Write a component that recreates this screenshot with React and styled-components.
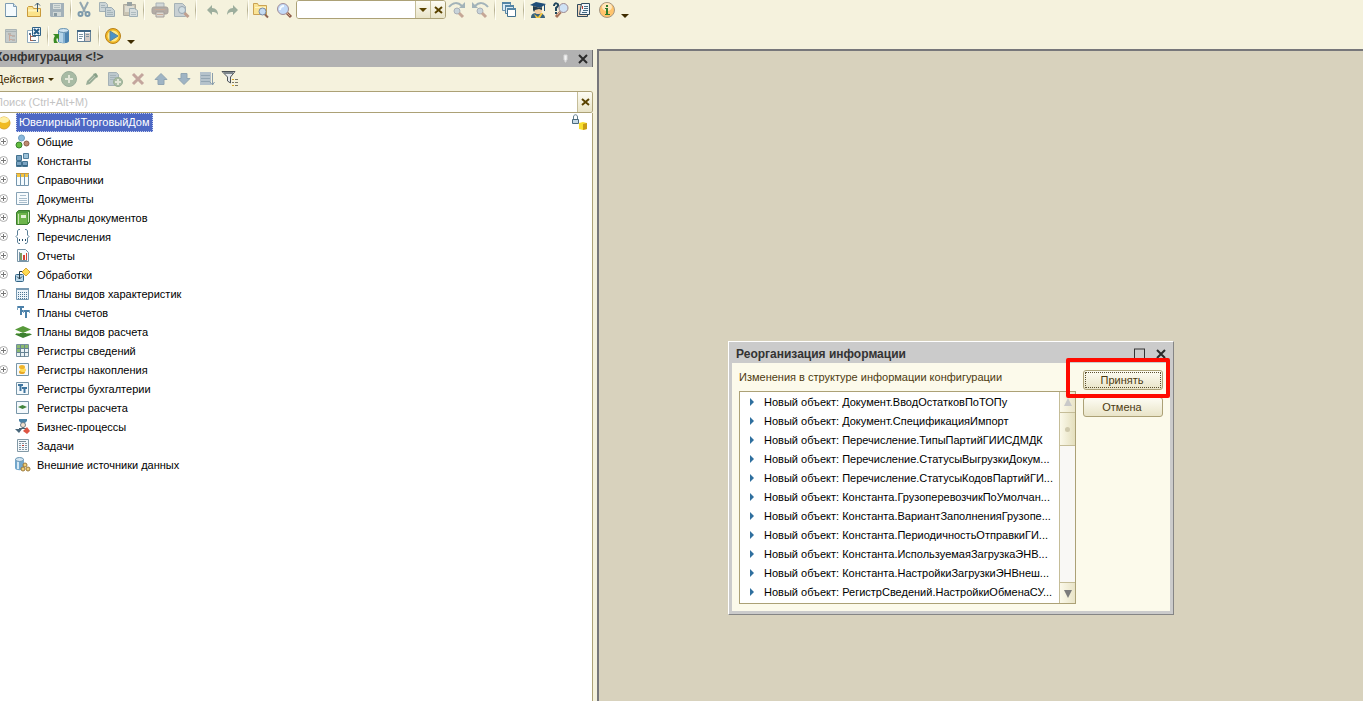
import React, { useState } from 'react';
import styled, { createGlobalStyle } from 'styled-components';

const GlobalStyle = createGlobalStyle`
  * {
    box-sizing: border-box;
  }

  body {
    margin: 0;
    background: #f5f2dd;
    overflow: hidden;
  }

  body, button, input {
    font-family: "Liberation Sans", Arial, sans-serif;
    font-size: 11px;
  }
`;

const icons = {
  newDoc: (
    <>
      <path d="M2.500 1.500h8l3 3v10h-11z" fill="#f4fafd" stroke="#7f9db4" />
      <path d="M10.500 1.500v3h3" fill="#d5e5ee" stroke="#7f9db4" />
      <path d="M3 14.500h11" stroke="#4f7790" />
    </>
  ),
  open: (
    <>
      <path d="M1.500 14.500v-9l1-1h4l1 2h7v8z" fill="#fbe38a" stroke="#c99a3c" />
      <path d="M2 8.500h12" stroke="#fff4bd" strokeWidth="2" />
      <path d="M11.500 10V1M9 3.500L11.500 1 14 3.500" fill="none" stroke="#3c5a70" />
    </>
  ),
  save: (
    <>
      <path d="M1 1h14v14H2l-1-1z" fill="#a3b1b9" />
      <path d="M4 2h8v5H4z" fill="#d9dfdc" />
      <path d="M4 10h8v4H4z" fill="#d0d7d5" />
      <path d="M5 11h3v3H5z" fill="#899aa2" />
      <path d="M5 3.500h6M5 5.500h6" stroke="#b2bec0" />
    </>
  ),
  cut: (
    <>
      <path d="M4 0l5 10M12 0L7 10" stroke="#93a6b0" strokeWidth="2" />
      <circle cx="4.500" cy="12" r="2" fill="none" stroke="#7d9aab" strokeWidth="2" />
      <circle cx="11.500" cy="12" r="2" fill="none" stroke="#7d9aab" strokeWidth="2" />
    </>
  ),
  copy: (
    <>
      <path d="M.5 .5h6l2 2v7h-8z" fill="#ccd5d7" stroke="#a3b1b6" />
      <path d="M6.500 5.500h6l3 3v6h-9z" fill="#c6d1d5" stroke="#98a9b2" />
      <path d="M2 3.500h4M2 5.500h4M8 8.500h4M8 10.500h6M8 12.500h6" stroke="#a5b4ba" />
    </>
  ),
  paste: (
    <>
      <path d="M1.500 2.500h12v11h-12z" fill="#c9c4b3" stroke="#aeaba0" />
      <path d="M5 0h5v4H5z" fill="#98a2a3" />
      <path d="M3 4h9v6H3z" fill="#dfddd2" />
      <path d="M7.500 6.500h5l3 2v6h-8z" fill="#d6dddd" stroke="#9eafb6" />
      <path d="M9 10.500h5M9 12.500h5" stroke="#afbcc0" />
    </>
  ),
  print: (
    <>
      <path d="M4 1h8v5H4z" fill="#d3d8d8" stroke="#aab2b6" />
      <rect x="0" y="5" width="16" height="7" rx="2" fill="#b4aca5" stroke="#a5a19d" />
      <path d="M4 10h8v5H4z" fill="#dad8d1" stroke="#a59f9b" />
      <path d="M5 12.500h6M3 7.500h10" stroke="#c9aa98" />
    </>
  ),
  preview: (
    <>
      <path d="M1.500 1.500h8l3 3v10h-11z" fill="#c8d0d3" stroke="#a6b2b6" />
      <circle cx="9" cy="8" r="3.500" fill="#d0dde2" stroke="#98a6b0" />
      <path d="M11.500 11l4 4" stroke="#c0a08f" strokeWidth="3" />
    </>
  ),
  undo: <path d="M3 8l5-5v3c4 0 6 3 6 7-2-3-3-3-6-3v3z" fill="#9dae9d" />,
  redo: <path d="M13 8L8 3v3c-4 0-6 3-6 7 2-3 3-3 6-3v3z" fill="#9dae9d" />,
  findFiles: (
    <>
      <path d="M.5 12.500v-11h4l1 2h8v9z" fill="#fae494" stroke="#caa253" />
      <path d="M2 5.500h11" stroke="#fff4c4" />
      <circle cx="9.500" cy="9.500" r="3.500" fill="#c5dbf1" stroke="#7a8ba5" />
      <path d="M12 12.500l3 3" stroke="#8e6552" strokeWidth="2" />
    </>
  ),
  find: (
    <>
      <circle cx="7" cy="7" r="5.500" fill="#c3daf8" stroke="#a28d98" />
      <path d="M4 8a4 4 0 0 1 4-4" fill="none" stroke="#f4faff" strokeWidth="2" />
      <path d="M11 11l4 4" stroke="#8d5b48" strokeWidth="3" />
      <path d="M11 11l3 3" stroke="#d5aa8f" />
    </>
  ),
  findNext: (
    <>
      <path d="M0 5c4-5 9-5 13-1" fill="none" stroke="#a3b3b9" strokeWidth="2" />
      <path d="M10 6h6V0z" fill="#a3b3b9" />
      <circle cx="8" cy="9" r="3" fill="#c8d3d9" stroke="#a9b0b8" />
      <path d="M10 11l4 4" stroke="#c5a796" strokeWidth="3" />
    </>
  ),
  findPrev: (
    <>
      <path d="M16 5C12 0 7 0 3 4" fill="none" stroke="#a3b3b9" strokeWidth="2" />
      <path d="M6 6H0V0z" fill="#a3b3b9" />
      <circle cx="8" cy="9" r="3" fill="#c8d3d9" stroke="#a9b0b8" />
      <path d="M10 11l4 4" stroke="#c5a796" strokeWidth="3" />
    </>
  ),
  windows: (
    <>
      <path d="M1.500 .5h8v8h-8z" fill="#dcebf4" stroke="#6b92ac" />
      <path d="M4.500 3.500h8v8h-8z" fill="#dcebf4" stroke="#5684a2" />
      <path d="M6.500 6.500h8v8h-8z" fill="#fff" stroke="#41718f" />
      <path d="M1 1h9M4 4h9M6 7h9" stroke="#5585a5" strokeWidth="2" />
    </>
  ),
  assistant: (
    <>
      <path d="M1 16c0-4 2-5 6-5s8 1 8 5z" fill="#38627d" />
      <path d="M4 12l4 3 3-4h2l-3 5H6z" fill="#f4c73c" />
      <path d="M4 4h8v4c0 3-1 4-4 4S4 10 4 7z" fill="#f3cda0" />
      <path d="M0 3l6-3 10 2-6 4z" fill="#1f4e79" />
      <path d="M3 4l7 2 2-1v3l-3-1-4 1-1 2-1-2z" fill="#223d50" />
      <path d="M14.500 3v6" stroke="#1f4e79" />
    </>
  ),
  helpSearch: (
    <>
      <path d="M1 4c0-4 5-3 4 0L3 6v3M3 10v2" fill="none" stroke="#21465d" strokeWidth="2" />
      <circle cx="10.500" cy="6" r="4.500" fill="#cfe2f5" stroke="#9c8890" />
      <path d="M7.500 10L3 15" stroke="#a77359" strokeWidth="3" />
      <path d="M7 10l-3 3" stroke="#dcb49c" />
    </>
  ),
  syntax: (
    <>
      <path d="M1.500 2.500h10v12h-10z" fill="#f2d7b9" stroke="#2f4b60" />
      <path d="M5.500 1.500h8v11h-10z" fill="#eef5fa" stroke="#2f4b60" />
      <path d="M8 4.500h4M8 6.500h4M7 8.500h5M6 10.500h5" stroke="#456b84" />
      <path d="M6 4h1v3H6z" fill="#c13d2f" />
    </>
  ),
  info: (
    <>
      <circle cx="8" cy="8" r="7.500" fill="#ffc46c" stroke="#a79882" />
      <ellipse cx="8" cy="5" rx="5" ry="4" fill="#ffe8bd" />
      <path d="M7 3h2v2H7zM6 6h3v6h2v1H6v-1h1V7H6z" fill="#2f7b2c" />
    </>
  ),
  configClosed: (
    <>
      <path d="M2.500 1.500h11v13h-11z" fill="#c5cbca" stroke="#aab4b5" />
      <path d="M3 3.500h10" stroke="#aab4b5" />
      <path d="M6.500 5v8M7 7.500h3M7 11.500h3" stroke="#cba99b" />
      <path d="M5 5h3v2H5zM9 7h3v2H9zM9 11h3v2H9z" fill="#b9b3ad" />
    </>
  ),
  configClose: (
    <>
      <path d="M1.500 2.500h11v12h-11z" fill="#fff" stroke="#8da9bd" />
      <path d="M4.500 6v7M5 8.500h3M5 12.500h3" stroke="#a3604f" />
      <path d="M3 5h2v2H3zM7 8h3v1H7zM7 12h3v1H7z" fill="#57748a" />
      <path d="M6.500 -.5h8v8h-8z" fill="#eef6fb" stroke="#2e6087" />
      <path d="M8 1l5 5M13 1L8 6" stroke="#245b87" strokeWidth="2" />
    </>
  ),
  updateDb: (
    <>
      <path d="M5 2v11c0 3 11 3 11 0V2z" fill="#4c83b0" />
      <path d="M6 3v11l4 1V4z" fill="#b5d4e9" />
      <path d="M10 4v11l2 0V4z" fill="#83afd0" />
      <ellipse cx="10.500" cy="2.500" rx="5" ry="2" fill="#cfe3f1" stroke="#6793b1" />
      <path d="M1 15c-1-4 0-6 1-7L0 6h6v6l-2-2c-1 1-1 3 1 5z" fill="#3a8b25" />
    </>
  ),
  dbWindow: (
    <>
      <path d="M1.500 2.500h13v11h-13z" fill="#fff" stroke="#668298" />
      <path d="M1 3h14" stroke="#426684" strokeWidth="2" />
      <path d="M9 5h5v8H9z" fill="#d5cbc6" />
      <path d="M3 6.500h4M3 8.500h4M3 10.500h3M10 6.500h3M10 8.500h3" stroke="#8094a2" />
      <path d="M8.500 4v9" stroke="#668298" />
    </>
  ),
  run: (
    <>
      <circle cx="8" cy="8" r="7.500" fill="#f1b722" stroke="#b98119" />
      <circle cx="8" cy="8" r="5.500" fill="#ffe98a" />
      <path d="M5 3l8 5-8 5z" fill="#4c93c9" stroke="#5f8496" />
    </>
  ),
  add: (
    <>
      <circle cx="8" cy="8" r="7.500" fill="#a8bba4" stroke="#9cae9b" />
      <path d="M8 4v8M4 8h8" stroke="#e2e6d7" strokeWidth="2" />
    </>
  ),
  edit: (
    <>
      <path d="M3 10l7-7 3 3-7 7-4 1z" fill="#9aad98" />
      <path d="M9 3l3-1 2 3-1 2z" fill="#87a087" />
      <path d="M5 11l6-6" stroke="#bfccb9" />
    </>
  ),
  addCopy: (
    <>
      <path d="M1.500 1.500h8l2 2v11h-10z" fill="#bcc8cd" stroke="#a4b1b6" />
      <path d="M3 4.500h6M3 6.500h6M3 8.500h5" stroke="#a6b4ba" />
      <circle cx="11" cy="11" r="4.500" fill="#a9bca3" stroke="#9aaf96" />
      <path d="M11 8v6M8 11h6" stroke="#e2e6d7" strokeWidth="2" />
    </>
  ),
  remove: <path d="M3 3l10 10M13 3L3 13" stroke="#c3a59d" strokeWidth="3" />,
  up: <path d="M8 2.500L14 8.500h-3v5H5v-5H2z" fill="#9fb4c4" stroke="#91a5b2" />,
  down: <path d="M8 13.500L2 7.500h3v-5h6v5h3z" fill="#9fb4c4" stroke="#91a5b2" />,
  sort: (
    <>
      <path d="M1 1h11v13H1z" fill="#b5c2cb" />
      <path d="M2 4.500h9M2 7.500h9M2 10.500h9" stroke="#94a6b3" />
      <path d="M13.500 2v12M11 11l2.500 3 2-3" fill="none" stroke="#899dac" />
    </>
  ),
  filter: (
    <>
      <path d="M0 .5h13L8.500 6v6l-3-2V6z" fill="#e5e8ea" stroke="#4d5358" />
      <path d="M2 2h9" stroke="#7e878d" strokeWidth="2" />
      <path d="M10 8.500h2M13 8.500h3M10 11.500h2M13 11.500h3M10 14.500h2M13 14.500h3" stroke="#7c7968" />
      <path d="M10 8h2v1h-2zM10 14h2v1h-2z" fill="#d8a522" />
    </>
  ),
  common: (
    <>
      <circle cx="5.500" cy="4" r="3" fill="#8bb9dc" stroke="#6d9dbf" />
      <circle cx="3" cy="11" r="3" fill="#63bd3e" stroke="#37802c" />
      <circle cx="10.500" cy="9.500" r="2.500" fill="#bf8a70" stroke="#895d48" />
    </>
  ),
  constants: (
    <>
      <path d="M.5 2.500h5v5h-5zM.5 8.500h5v5h-5zM6.500 8.500h5v5h-5z" fill="#7ba4c2" stroke="#43728f" />
      <path d="M7.500 .5h5v5h-5z" fill="#9dc2d8" stroke="#527f9c" />
      <path d="M1 12.500h4M7 12.500h4" stroke="#376583" />
    </>
  ),
  catalogs: (
    <>
      <path d="M.5 2.500h4v11h-4zM4.500 2.500h4v11h-4zM8.500 2.500h4v11h-4z" fill="#f5fbfe" stroke="#7495ad" />
      <path d="M1 2h3v3H1zM5 2h3v3H5zM9 2h3v3H9z" fill="#f5c540" />
      <path d="M0 1.500h13" stroke="#c99b3b" />
    </>
  ),
  documents: (
    <>
      <path d="M.5 1.500h12v12H.5z" fill="#f7fbfd" stroke="#87a2b5" />
      <path d="M4 4.500h6M3 7.500h8M3 9.500h8M3 11.500h8" stroke="#a9bdcc" />
    </>
  ),
  journals: (
    <>
      <path d="M.5 2.500l2-2h11v12l-2 2H.5z" fill="#4d9a3c" stroke="#3c7b2f" />
      <path d="M1 3h10v11H1z" fill="#6db54b" />
      <path d="M5 5h5v3H5z" fill="#e2f1d6" />
      <path d="M2.500 4v10M12.500 2v10" stroke="#cae5b7" />
    </>
  ),
  enums: (
    <>
      <path d="M4 .5H2.500L1.500 2v4L0 7.500 1.500 9v4l1 1.500H4M9 .5h1.500l1 1.500v4L13 7.500 11.500 9v4l-1 1.500H9" fill="none" stroke="#5b7f97" />
      <path d="M3 10h1v2H3zM6 10h1v2H6zM9 10h1v2H9z" fill="#234b65" />
    </>
  ),
  reports: (
    <>
      <path d="M1.500 1.500h8l3 3v9h-11z" fill="#f6fafc" stroke="#7895a7" />
      <path d="M3.500 4v8" stroke="#7895a7" />
      <path d="M4 5h2v7H4z" fill="#7d9a5f" />
      <path d="M7 7h2v5H7zM10 5h1v7h-1z" fill="#d44332" />
      <path d="M3 12.500h8" stroke="#7895a7" />
    </>
  ),
  processing: (
    <>
      <path d="M10 1l4 4-4 4-4-4z" fill="#ffdc51" stroke="#d7a234" />
      <rect x="-.5" y="7.500" width="8" height="7" rx="1" fill="#bdd9eb" stroke="#316486" />
      <path d="M6 4.500H3.500V12M1 9.500L3.500 12 6 9.500" fill="none" stroke="#233b49" />
    </>
  ),
  charTypes: (
    <>
      <path d="M.5 2.500h12v11H.5z" fill="#edf5fb" stroke="#7799b2" />
      <path d="M0 3h13" stroke="#7799b2" strokeWidth="2" />
      <path d="M2 6.500h9M2 8.500h9M2 10.500h9M2 12.500h9" stroke="#4c7593" strokeDasharray="1 1" />
    </>
  ),
  accounts: (
    <>
      <path d="M1 2h7M5 2v8M6 6h8M10 6v7" fill="none" stroke="#4b80a9" strokeWidth="2" />
      <path d="M1.500 1v4M7.500 5v3M13.500 5v3" stroke="#7ea6c2" />
    </>
  ),
  calcTypes: (
    <>
      <path d="M-1 10.500l3-1.500h11l3 1.500L7 14z" fill="#3c8030" />
      <path d="M-1 5.500L7 2l8 3.500L7 9z" fill="#57993a" />
      <path d="M0 9.500h4M10 9.500h4" stroke="#93c07a" />
    </>
  ),
  infoRegs: (
    <>
      <path d="M.5 1.500h12v12H.5z" fill="#eaf2f5" stroke="#76909f" />
      <path d="M4.500 2v12M8.500 2v12M1 5.500h12M1 9.500h12" stroke="#668394" />
      <path d="M1 2h3v3H1zM5 2h3v3H5zM9 2h3v3H9zM1 6h3v3H1z" fill="#8cba70" />
    </>
  ),
  accumRegs: (
    <>
      <path d="M.5 1.500h12v12H.5z" fill="#f4f9fc" stroke="#7896a8" />
      <ellipse cx="6" cy="10" rx="3" ry="2" fill="#e8a727" />
      <ellipse cx="7" cy="8" rx="3" ry="2" fill="#ffda55" />
      <ellipse cx="6" cy="5" rx="3" ry="2" fill="#efb52d" />
    </>
  ),
  bookRegs: (
    <>
      <path d="M.5 1.500h12v12H.5z" fill="#f4f9fc" stroke="#7896a8" />
      <path d="M2 4h5M4.500 4v6M6 7h5M8.500 7v5" stroke="#3f759e" strokeWidth="2" />
    </>
  ),
  calcRegs: (
    <>
      <path d="M.5 1.500h12v12H.5z" fill="#f4f9fc" stroke="#7896a8" />
      <path d="M2 7l4.500-2L11 7 6.500 9z" fill="#43863d" />
    </>
  ),
  business: (
    <>
      <path d="M3 0h8v2L9 4H5L3 2z" fill="#4b83a7" />
      <circle cx="7" cy="6" r="2.500" fill="#f3e0cc" stroke="#6c7f8a" />
      <path d="M3 9.500h8M7 8v2" stroke="#4a6270" />
      <path d="M-1 10h7l-3 4z" fill="#49677b" />
      <path d="M11 8l3 4-3 3-4-3z" fill="#de5543" />
    </>
  ),
  tasks: (
    <>
      <path d="M1.500 1.500h11v12h-11z" fill="#f4f9fc" stroke="#8299a6" />
      <path d="M3 3.500h7" stroke="#7a8b96" />
      <path d="M3 5.500h8M3 7.500h8M3 9.500h8M3 11.500h8" stroke="#8493a0" strokeDasharray="2 1" />
      <path d="M6 7h2v1H6z" fill="#c0392b" />
    </>
  ),
  external: (
    <>
      <path d="M-1 2v9c0 3 9 3 9 0V2z" fill="#73a7cc" />
      <path d="M1 3v9h2V3z" fill="#d5e9f5" />
      <ellipse cx="3.500" cy="2.500" rx="4" ry="2" fill="#d5e6f1" stroke="#6894b2" />
      <circle cx="9" cy="8" r="2" fill="#f3cf74" stroke="#9a793c" />
      <circle cx="7" cy="12" r="2" fill="#f3cf74" stroke="#9a793c" />
      <circle cx="12" cy="12" r="2" fill="#f3cf74" stroke="#9a793c" />
    </>
  ),
  root: (
    <>
      <circle cx="4" cy="8" r="6" fill="#f0bb22" stroke="#dba52c" />
      <ellipse cx="4" cy="5" rx="5" ry="3" fill="#fff0a6" />
    </>
  ),
  lock: (
    <>
      <path d="M1.500 4V2c0-3 4-3 4 0v2" fill="none" stroke="#607b8c" />
      <path d="M.5 4.500h6v4h-6z" fill="#c4d8e5" stroke="#4b6a7d" />
      <path d="M7 8l4-1 4 1v6l-4 1-4-1z" fill="#f8df2e" />
      <path d="M11 9l4-1v6l-4 1z" fill="#c89c14" />
    </>
  ),
  cross: <path d="M4 4l8 8M12 4l-8 8" stroke="currentColor" strokeWidth="2" />,
  clear: <path d="M5 5l7 6M12 5l-7 6" stroke="currentColor" strokeWidth="2" />,
  maximize: <path d="M2.500 3v10M12.500 3v10M2 12.500h11M2 3h11" fill="none" stroke="#333" />,
  pin: <path d="M6 4h3v5H8v2H7V9H6z" fill="#f3f3f3" stroke="#d8d8d8" />,
  caret: <path d="M4 6h8l-4 4z" fill="currentColor" />,
  caretUp: <path d="M4 12h8L8 4z" fill="currentColor" />,
  scrollDown: <path d="M4 5h8l-4 8z" fill="currentColor" />,
  marker: <path d="M6 4l4 4-4 4z" fill="#2e6f9e" />,
  expand: (
    <>
      <circle cx="3.500" cy="7.500" r="4" fill="#fff" stroke="#adadad" />
      <path d="M1 7.500h5M3.500 5v5" stroke="#777" />
    </>
  ),
};

const Icon = ({ name }) => (
  <IconSvg viewBox="0 0 16 16" aria-hidden="true">
    {icons[name]}
  </IconSvg>
);

const mainTools = [
  { items: [['newDoc', 'Новый'], ['open', 'Открыть'], ['save', 'Сохранить']] },
  { items: [['cut', 'Вырезать'], ['copy', 'Копировать'], ['paste', 'Вставить']] },
  { tight: true, items: [['print', 'Печать'], ['preview', 'Просмотр']] },
  { tight: true, items: [['undo', 'Отменить'], ['redo', 'Вернуть']] },
];

const helpTools = [
  ['assistant', 'Советы'],
  ['helpSearch', 'Поиск в справке'],
  ['syntax', 'Синтакс-помощник'],
  ['info', 'О программе'],
];

const treeTools = [
  ['add', 'Добавить'],
  ['edit', 'Изменить'],
  ['addCopy', 'Скопировать'],
  ['remove', 'Удалить'],
  ['up', 'Вверх'],
  ['down', 'Вниз'],
  ['sort', 'Упорядочить'],
  ['filter', 'Отбор'],
];

const treeItems = [
  ['common', 'Общие', true],
  ['constants', 'Константы', true],
  ['catalogs', 'Справочники', true],
  ['documents', 'Документы', true],
  ['journals', 'Журналы документов', true],
  ['enums', 'Перечисления', true],
  ['reports', 'Отчеты', true],
  ['processing', 'Обработки', true],
  ['charTypes', 'Планы видов характеристик', true],
  ['accounts', 'Планы счетов', false],
  ['calcTypes', 'Планы видов расчета', false],
  ['infoRegs', 'Регистры сведений', true],
  ['accumRegs', 'Регистры накопления', true],
  ['bookRegs', 'Регистры бухгалтерии', false],
  ['calcRegs', 'Регистры расчета', false],
  ['business', 'Бизнес-процессы', false],
  ['tasks', 'Задачи', false],
  ['external', 'Внешние источники данных', false],
];

const changes = [
  'Документ.ВводОстатковПоТОПу',
  'Документ.СпецификацияИмпорт',
  'Перечисление.ТипыПартийГИИСДМДК',
  'Перечисление.СтатусыВыгрузкиДокум...',
  'Перечисление.СтатусыКодовПартийГИ...',
  'Константа.ГрузоперевозчикПоУмолчан...',
  'Константа.ВариантЗаполненияГрузопе...',
  'Константа.ПериодичностьОтправкиГИ...',
  'Константа.ИспользуемаяЗагрузкаЭНВ...',
  'Константа.НастройкиЗагрузкиЭНВнеш...',
  'РегистрСведений.НастройкиОбменаСУ...',
];

const Tools = ({ items, tight }) => (
  <ToolGroup $tight={tight}>
    {items.map(([name, label]) => (
      <ToolButton key={name} type="button" aria-label={label} $tight={tight}>
        <Icon name={name} />
      </ToolButton>
    ))}
  </ToolGroup>
);

const MainToolbar = () => {
  const [query, setQuery] = useState('');

  return (
    <Toolbars>
      <Toolbar>
        {mainTools.map((group) => (
          <React.Fragment key={group.items[0][0]}>
            <Tools {...group} />
            <Separator />
          </React.Fragment>
        ))}
        <Tools items={[['findFiles', 'Глобальный поиск'], ['find', 'Найти']]} />
        <SearchCombo>
          <input
            aria-label="Найти текст"
            value={query}
            onChange={(e) => setQuery(e.target.value)}
          />
          <FieldButton type="button" aria-label="История поиска">
            <Icon name="caret" />
          </FieldButton>
          <FieldButton
            type="button"
            aria-label="Очистить"
            onClick={() => setQuery('')}
          >
            <Icon name="clear" />
          </FieldButton>
        </SearchCombo>
        <Tools items={[['findNext', 'Найти далее'], ['findPrev', 'Найти назад']]} />
        <Separator $wide />
        <Tools items={[['windows', 'Окна']]} />
        <Separator $wide />
        <Tools items={helpTools} />
        <MoreButton type="button" aria-label="Еще">
          <Icon name="caret" />
        </MoreButton>
      </Toolbar>
      <Toolbar>
        <Tools
          items={[
            ['configClosed', 'Открыть конфигурацию'],
            ['configClose', 'Закрыть конфигурацию'],
          ]}
        />
        <Separator />
        <Tools
          items={[
            ['updateDb', 'Обновить конфигурацию базы данных'],
            ['dbWindow', 'Конфигурация базы данных'],
          ]}
        />
        <Separator $wide />
        <Tools items={[['run', 'Начать отладку']]} />
        <MoreButton type="button" aria-label="Еще">
          <Icon name="caret" />
        </MoreButton>
      </Toolbar>
    </Toolbars>
  );
};

const ConfigPanel = () => (
  <Panel>
    <PanelHeader>
      <h2>Конфигурация &lt;!&gt;</h2>
      <BareButton type="button" aria-label="Закрепить">
        <Icon name="pin" />
      </BareButton>
      <BareButton type="button" aria-label="Закрыть">
        <Icon name="cross" />
      </BareButton>
    </PanelHeader>
    <PanelTools>
      <ActionsButton type="button">
        Действия
        <SmallCaret />
      </ActionsButton>
      <Tools items={treeTools} />
    </PanelTools>
    <TreeSearch>
      <input aria-label="Поиск" placeholder="Поиск (Ctrl+Alt+M)" />
      <FieldButton type="button" aria-label="Очистить поиск">
        <Icon name="clear" />
      </FieldButton>
    </TreeSearch>
    <Tree>
      <RootRow>
        <Icon name="root" />
        <RootName>ЮвелирныйТорговыйДом</RootName>
        <Icon name="lock" />
      </RootRow>
      {treeItems.map(([icon, label, expandable]) => (
        <TreeRow key={icon}>
          <Expander>{expandable && <Icon name="expand" />}</Expander>
          <Icon name={icon} />
          <span>{label}</span>
        </TreeRow>
      ))}
    </Tree>
  </Panel>
);

const ReorganizeDialog = () => (
  <Dialog role="dialog" aria-labelledby="dialog-title">
    <DialogTitle>
      <h2 id="dialog-title">Реорганизация информации</h2>
      <BareButton type="button" aria-label="Развернуть">
        <Icon name="maximize" />
      </BareButton>
      <BareButton type="button" aria-label="Закрыть окно">
        <Icon name="cross" />
      </BareButton>
    </DialogTitle>
    <DialogBody>
      <ChangesColumn>
        <p>Изменения в структуре информации конфигурации</p>
        <ListBox>
          <ChangeList>
            {changes.map((name) => (
              <li key={name}>
                <Icon name="marker" />
                <span>Новый объект: {name}</span>
              </li>
            ))}
          </ChangeList>
          <ScrollBar>
            <ScrollButton type="button" aria-label="Прокрутить вверх" $muted>
              <Icon name="caretUp" />
            </ScrollButton>
            <ScrollThumb />
            <ScrollTrack />
            <ScrollButton type="button" aria-label="Прокрутить вниз">
              <Icon name="scrollDown" />
            </ScrollButton>
          </ScrollBar>
        </ListBox>
      </ChangesColumn>
      <DialogActions>
        <DialogButton type="button" $active>
          Принять
        </DialogButton>
        <DialogButton type="button">Отмена</DialogButton>
      </DialogActions>
    </DialogBody>
    <Highlight />
  </Dialog>
);

const App = () => (
  <>
    <GlobalStyle />
    <Window>
      <MainToolbar />
      <Content>
        <ConfigPanel />
        <Workspace>
          <ReorganizeDialog />
        </Workspace>
      </Content>
    </Window>
  </>
);

export default App;

const Window = styled.div`
  display: flex;
  flex-direction: column;
  height: 100vh;
  overflow: hidden;
`;

const IconSvg = styled.svg`
  display: block;
  flex: none;
  width: 16px;
  height: 16px;
  overflow: visible;
`;

const Toolbars = styled.header`
  display: flex;
  flex-direction: column;
  gap: 6px;
  padding-bottom: 3px;
`;

const Toolbar = styled.div`
  display: flex;
  align-items: center;
  height: 20px;
`;

const ToolGroup = styled.div`
  display: flex;
  padding: 0 ${({ $tight }) => ($tight ? 3 : 0)}px;
`;

const BareButton = styled.button`
  display: flex;
  align-items: center;
  padding: 0;
  border: 0;
  background: none;
  color: #2b2b2b;
`;

const ToolButton = styled(BareButton)`
  width: ${({ $tight }) => ($tight ? 21 : 23)}px;
  height: 20px;
  padding-left: 3px;
`;

const MoreButton = styled(BareButton)`
  width: 12px;
  height: 20px;
  padding-top: 12px;
  justify-content: center;
  color: #3f2c00;
`;

const Separator = styled.div`
  width: 2px;
  height: 20px;
  margin: 0 ${({ $wide }) => ($wide ? 2 : 1)}px;
  background: linear-gradient(#f5f2dd, #b5af91, #f5f2dd);
  border-right: 1px solid #fffef5;
`;

const SearchCombo = styled.div`
  display: flex;
  width: 150px;
  height: 19px;
  margin-bottom: 1px;
  border: 1px solid #aca176;
  border-radius: 3px;
  background: #fff;
  overflow: hidden;

  > input {
    flex: 1;
    min-width: 0;
    border: 0;
    outline: 0;
    background: #fff;
  }
`;

const FieldButton = styled(BareButton)`
  width: 15px;
  justify-content: center;
  border-left: 1px solid #c5bd98;
  background: linear-gradient(#fdfcf3, #e9e4c8);
  color: #5a4300;
`;

const Content = styled.main`
  display: flex;
  flex: 1;
  min-height: 0;
`;

const Panel = styled.section`
  display: flex;
  flex-direction: column;
  flex: 0 0 593px;
  padding-top: 1px;
  overflow: hidden;
`;

const PanelHeader = styled.div`
  display: flex;
  align-items: center;
  gap: 1px;
  height: 17px;
  padding-right: 1px;
  background: #b2b2b2;
  border-right: 1px solid #6f6f6f;

  > h2 {
    flex: 1;
    margin: 0 0 0 -5px;
    padding-bottom: 2px;
    font-size: 12px;
    line-height: 15px;
    color: #333;
  }
`;

const PanelTools = styled.div`
  display: flex;
  align-items: center;
  height: 24px;
`;

const ActionsButton = styled(BareButton)`
  gap: 4px;
  width: 62px;
  margin-left: -4px;
  color: #3f2c00;
`;

const SmallCaret = styled.span`
  border: 3px solid transparent;
  border-top-color: #3f2c00;
  border-bottom: 0;
`;

const TreeSearch = styled.div`
  display: flex;
  height: 22px;
  border: 1px solid #aca176;
  border-left: 0;
  border-radius: 0 3px 3px 0;
  background: #fff;
  overflow: hidden;

  > input {
    flex: 1;
    min-width: 0;
    margin-left: -7px;
    padding-bottom: 2px;
    border: 0;
    outline: 0;
  }

  > input::placeholder {
    color: #c3c3c3;
  }
`;

const Tree = styled.ul`
  flex: 1;
  margin: 0;
  padding: 0;
  list-style: none;
  background: #fff;
  border-right: 1px solid #aca176;
`;

const TreeRow = styled.li`
  display: flex;
  align-items: center;
  height: 19px;
  color: #000;

  > span:last-child {
    margin-left: 5px;
  }
`;

const RootRow = styled(TreeRow)`
  padding-right: 4px;

  > svg:last-child {
    margin-left: auto;
  }
`;

const RootName = styled.span`
  padding: 0 2px;
  line-height: 17px;
  border: 1px dotted #c9d2f0;
  background: #4d68c4;
  color: #fff;
`;

const Expander = styled.span`
  width: 16px;
`;

const Workspace = styled.section`
  position: relative;
  flex: 1;
  margin-left: 4px;
  background: #d8d2bd;
  border-top: 2px solid #77777a;
  border-left: 2px solid #77777a;
`;

const Dialog = styled.div`
  position: absolute;
  top: 290px;
  left: 129px;
  width: 446px;
  padding: 0 3px 3px;
  background: #cbcbcb;
  border: 1px solid #fff;
  border-right-color: #858585;
  border-bottom-color: #858585;
`;

const DialogTitle = styled.div`
  display: flex;
  align-items: center;
  gap: 5px;
  height: 21px;
  padding: 2px 1px 0 4px;

  > h2 {
    flex: 1;
    margin: 0;
    font-size: 12px;
    color: #333;
  }
`;

const DialogBody = styled.div`
  display: flex;
  gap: 7px;
  padding: 7px;
  background: #fcfaeb;
`;

const ChangesColumn = styled.div`
  flex: 1;

  > p {
    margin: 0 0 7px;
    line-height: 14px;
    color: #4d3b10;
  }
`;

const ListBox = styled.div`
  display: flex;
  border: 1px solid #aca176;
  background: #fff;
`;

const ChangeList = styled.ul`
  flex: 1;
  margin: 0;
  padding: 0 0 2px;
  list-style: none;

  > li {
    display: flex;
    align-items: center;
    gap: 4px;
    height: 19px;
    padding-left: 4px;
    white-space: nowrap;
  }
`;

const ScrollBar = styled.div`
  display: flex;
  flex-direction: column;
  width: 16px;
  border-left: 1px solid #c5bd98;
  background: #f9f8f5;
`;

const ScrollButton = styled(BareButton)`
  width: 15px;
  height: 21px;
  justify-content: center;
  border: solid #c5bd98;
  border-width: ${({ $muted }) => ($muted ? '0 0 1px' : '1px 0 0')};
  background: linear-gradient(90deg, #fbf9ea, #e9e4c8);
  color: ${({ $muted }) => ($muted ? '#c9c9c9' : '#7b7b7b')};
`;

const ScrollThumb = styled.div`
  display: flex;
  align-items: center;
  justify-content: center;
  height: 33px;
  border-bottom: 1px solid #c5bd98;
  background: linear-gradient(90deg, #fbf9ea, #e4dfbd);

  &::after {
    content: '';
    width: 5px;
    height: 5px;
    border-radius: 50%;
    background: #cfc9ac;
  }
`;

const ScrollTrack = styled.div`
  flex: 1;
`;

const DialogActions = styled.div`
  display: flex;
  flex-direction: column;
  gap: 7px;
  width: 80px;
`;

const DialogButton = styled.button`
  height: 20px;
  padding: 0 2px 0 0;
  border: 1px solid #aca176;
  border-radius: 3px;
  background: linear-gradient(#fdfcf3, #e9e4c8);
  color: #4d3b10;
  outline: ${({ $active }) => ($active ? '1px dotted #5c5030' : '0')};
  outline-offset: -3px;
`;

const Highlight = styled.div`
  position: absolute;
  top: 16px;
  right: 3px;
  width: 104px;
  height: 40px;
  border: 4px solid #ff0a00;
  border-radius: 2px;
  pointer-events: none;
`;
